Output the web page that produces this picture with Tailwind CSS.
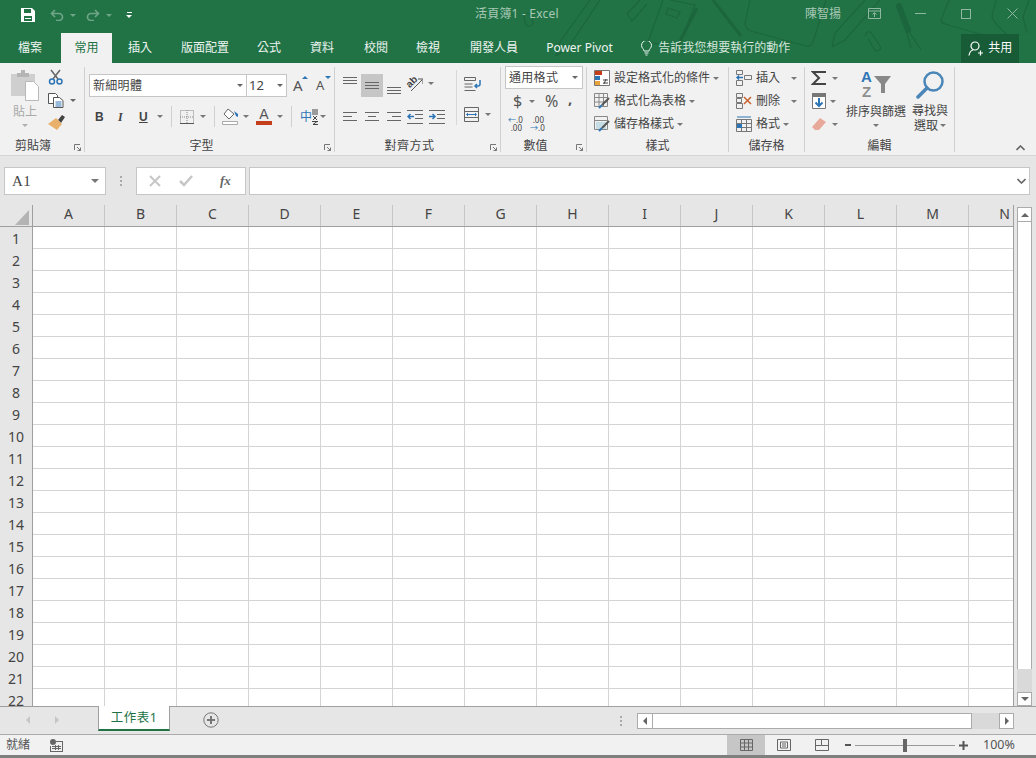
<!DOCTYPE html>
<html lang="zh-Hant">
<head>
<meta charset="UTF-8">
<title>活頁簿1 - Excel</title>
<script src="https://cdn.jsdelivr.net/npm/@tailwindcss/browser@4"></script>
</head>
<body class="w-[1036px] h-[758px] overflow-hidden bg-[#e6e6e6] text-[12px] text-[#444] font-['Noto_Sans','Noto_Sans_CJK_TC',sans-serif]">

<!-- green header: title bar + tabs -->
<header class="relative h-[63px] bg-[#217346] overflow-hidden">
  <svg class="absolute left-0 top-0 w-[1036px] h-[63px]" viewBox="0 0 1036 63" fill="none" stroke="#1c663d" stroke-width="1.200">
    <path d="M556 56 560 42 590 0M556 56 568 48 600 0M563 44l6 4"/>
    <path d="M524 18a4 4 0 0 1 8-1l1 6a4 4 0 0 1-7 2l-2-8"/>
    <path d="M627 14 640 0M647 4 632 21 627 14"/>
    <path d="M663 0 648 42 678 48 695 5 670 0M668 8l12 4-3 6-11-4z"/>
    <path d="M697 8 678 45" stroke-width="3"/>
    <path d="M713 0 741 36" stroke-width="3"/>
    <path d="M750 0 745 24Q746 29 751 31L806 46Q811 47 813 42L826 0"/>
    <path d="M832 47 835 33 865 0M832 47 845 40 880 0"/>
    <path d="M866 36a3 3 0 0 1 6-2l8 12a3 3 0 0 1-6 3l-6-10"/>
    <path d="M899 6 908 30" stroke-width="6" stroke-linecap="round"/>
    <path d="M908 30 921 50M906 30 911 48"/>
    <path d="M949 0 941 20Q941 23 945 24L990 37M1000 0"/>
    <path d="M996 0 992 16Q992 22 1010 37M1029 0 1023 17 1027 33"/>
  </svg>
  <div class="relative flex items-center h-[27px] mb-[6px]">
    <svg class="ml-[21px] mt-[3px] w-[14px] h-[14px]" viewBox="0 0 14 14"><path fill="#fff" d="M0 0h11l3 3v11H0z"/><path fill="#217346" d="M3 1h7v4H3zM3 8h8v5H3z"/><path fill="#fff" d="M4 10h6v1H4z"/></svg>
    <svg class="ml-[15px] mt-[3px] w-[14px] h-[12px]" viewBox="0 0 14 12" fill="none" stroke="#6fa487" stroke-width="1.700"><path d="M5 1 1.500 4.500 5 8M2 4.500h7a3.500 3.500 0 0 1 0 7H6"/></svg>
    <span class="ml-[6px] mt-[3px] border-x-[3px] border-t-[3px] border-x-transparent border-t-[#6fa487]"></span>
    <svg class="ml-[10px] mt-[3px] w-[14px] h-[12px]" viewBox="0 0 14 12" fill="none" stroke="#6fa487" stroke-width="1.700"><path d="M9 1l3.500 3.500L9 8M12 4.500H5a3.500 3.500 0 0 0 0 7h3"/></svg>
    <span class="ml-[6px] mt-[3px] border-x-[3px] border-t-[3px] border-x-transparent border-t-[#6fa487]"></span>
    <div class="ml-[14px] mt-[3px] flex flex-col gap-[2px] items-center">
      <span class="w-[5px] h-px bg-white"></span>
      <span class="border-x-[3px] border-t-[3px] border-x-transparent border-t-white"></span>
    </div>
    <span class="ml-[343px] w-[110px] text-[#a9c9b6] text-[12px] tracking-[0.200px] whitespace-nowrap">活頁簿1 - Excel</span>
    <span class="ml-[220px] text-[#a9c9b6] whitespace-nowrap">陳智揚</span>
    <svg class="ml-[27px] w-[13px] h-[11px]" viewBox="0 0 13 11" fill="none" stroke="#8eb8a1"><path d="M.5.500h12v10H.5zM.5 3h12M6.500 9V5M4.500 6.500l2-2 2 2"/></svg>
    <span class="ml-[34px] w-[11px] h-px bg-[#8eb8a1]"></span>
    <span class="ml-[35px] w-[10px] h-[10px] border border-[#8eb8a1]"></span>
    <svg class="ml-[36px] w-[11px] h-[11px]" viewBox="0 0 11 11" stroke="#8eb8a1"><path d="M.5.500l10 10M10.500.5l-10 10"/></svg>
  </div>
  <nav class="relative flex items-center h-[30px] text-[#eef5f1] text-[12px] whitespace-nowrap">
    <span class="ml-[18px]">檔案</span>
    <span class="ml-[19px] w-[51px] h-[30px] bg-[#f1f1f1] text-[#217346] flex items-center justify-center">常用</span>
    <span class="ml-[16px]">插入</span>
    <span class="ml-[29px]">版面配置</span>
    <span class="ml-[28px]">公式</span>
    <span class="ml-[29px]">資料</span>
    <span class="ml-[30px]">校閱</span>
    <span class="ml-[28px]">檢視</span>
    <span class="ml-[30px]">開發人員</span>
    <span class="ml-[28px] w-[67px] text-[12px]">Power Pivot</span>
    <svg class="ml-[28px] w-[11px] h-[15px]" viewBox="0 0 11 15" fill="none" stroke="#eef5f1"><path d="M3 10c0-2-2.500-3-2.500-5.500a5 5 0 0 1 10 0C10.500 7 8 8 8 10zM3.500 12h4M4.500 14h2"/></svg>
    <span class="ml-[6px] text-[#d5e6dc]">告訴我您想要執行的動作</span>
    <span class="ml-[171px] w-[58px] h-[29px] bg-[#185c37] flex items-center text-white">
      <svg class="ml-[7px] w-[15px] h-[15px]" viewBox="0 0 15 15" fill="none" stroke="#fff" stroke-width="1.200"><circle cx="7" cy="5" r="4"/><path d="M1 14.500c.5-3 2-5 4-5.500M10 12h5M12.500 9.500v5"/></svg>
      <span class="ml-[5px]">共用</span>
    </span>
  </nav>
</header>

<!-- ribbon -->
<section class="relative h-[93px] pt-[4px] bg-[#f1f1f1] border-b border-[#d4d4d4] flex">

  <!-- 剪貼簿 -->
  <div class="relative w-[85px] h-[85px] border-r border-[#d0d0d0] flex flex-col">
    <div class="flex h-[72px]">
      <div class="w-[48px] flex flex-col items-center pl-[2px] text-[#a9a9a9]">
        <svg class="mt-[3px] w-[28px] h-[31px]" viewBox="0 0 28 31"><path fill="#cfcfcf" d="M0 4h24v22H0z"/><path fill="#b5b5b5" d="M6 3h4V0h4v3h4v4H6z"/><path fill="#fff" stroke="#b8b8b8" d="M14.500 11.500h8l5 5v14h-13z"/></svg>
        <span class="mt-[3px] leading-[16px]">貼上</span>
        <span class="mt-[4px] border-x-[3px] border-t-[3px] border-x-transparent border-t-[#b0b0b0]"></span>
      </div>
      <div class="flex flex-col">
        <svg class="mt-[2px] w-[16px] h-[16px]" viewBox="0 0 16 16" fill="none"><path stroke="#666" stroke-width="1.500" d="M3 1l7 9M12 1l-7 9"/><circle cx="4" cy="12.500" r="2.500" stroke="#2e75b6" stroke-width="1.500"/><circle cx="11.500" cy="12.500" r="2.500" stroke="#2e75b6" stroke-width="1.500"/></svg>
        <div class="mt-[8px] flex items-center">
          <svg class="w-[16px] h-[15px]" viewBox="0 0 16 15" fill="#fff" stroke="#555"><path d="M.5.500h7l2 2v8h-9z"/><path d="M5.500 4.500h6l3.500 3v7H5.500z"/><path stroke="#2e75b6" d="M7.500 9h6M7.500 11h6M7.500 13h6"/></svg>
          <span class="ml-[6px] border-x-[3px] border-t-[3px] border-x-transparent border-t-[#666]"></span>
        </div>
        <svg class="mt-[7px] w-[17px] h-[16px]" viewBox="0 0 17 16"><path fill="#444" d="M10 5l4-5 3 2-4 6z"/><path fill="#e8b06a" d="M8 3l6 6-5 6-9-6z"/></svg>
      </div>
    </div>
    <div class="h-[13px] leading-[13px] text-center pr-[18px]">剪貼簿</div>
    <svg class="absolute right-[3px] bottom-[1px] w-[7px] h-[7px]" viewBox="0 0 7 7" fill="none" stroke="#777"><path d="M.5 6V.5H6M3 3l3.500 3.500M6.500 3.500v3h-3"/></svg>
  </div>

  <!-- 字型 -->
  <div class="relative w-[250px] h-[85px] border-r border-[#d0d0d0] flex flex-col">
    <div class="h-[72px] pl-[4px] pt-[7px]">
      <div class="flex items-center h-[23px]">
        <div class="w-[158px] h-[23px] bg-white border border-[#c6c6c6] flex items-center pl-[3px]">
          <span class="flex-1 tracking-[0.300px]">新細明體</span>
          <span class="mr-[3px] border-x-[3px] border-t-[3px] border-x-transparent border-t-[#666]"></span>
        </div>
        <div class="-ml-px w-[41px] h-[23px] bg-white border border-[#c6c6c6] flex items-center pl-[2px]">
          <span class="flex-1 text-[13px]">12</span>
          <span class="mr-[3px] border-x-[3px] border-t-[3px] border-x-transparent border-t-[#666]"></span>
        </div>
        <span class="relative ml-[6px] w-[15px] text-[15px] leading-none text-[#555]">A<span class="absolute right-0 top-[-2px] border-x-[3px] border-b-[3px] border-x-transparent border-b-[#2e75b6]"></span></span>
        <span class="relative ml-[8px] w-[13px] text-[13px] leading-none text-[#555]">A<span class="absolute right-[-2px] top-[-3px] border-x-[3px] border-t-[3px] border-x-transparent border-t-[#2e75b6]"></span></span>
      </div>
      <div class="mt-[8px] flex items-center h-[23px]">
        <span class="ml-[6px] w-[12px] text-[12px] font-bold font-['Liberation_Sans']">B</span>
        <span class="ml-[11px] w-[12px] text-[12px] font-bold italic font-['Liberation_Serif']">I</span>
        <span class="ml-[9px] w-[10px] text-[12px] font-bold underline font-['Liberation_Sans']">U</span>
        <span class="ml-[8px] border-x-[3px] border-t-[3px] border-x-transparent border-t-[#777]"></span>
        <span class="ml-[8px] w-px h-[21px] bg-[#d0d0d0]"></span>
        <svg class="ml-[8px] w-[14px] h-[14px]" viewBox="0 0 14 14" fill="none" stroke="#888" stroke-dasharray="1 1"><path d="M.5.500h13v13H.5zM7 0v14M0 7h14"/><path stroke="#555" stroke-dasharray="none" d="M0 13.500h14"/></svg>
        <span class="ml-[6px] border-x-[3px] border-t-[3px] border-x-transparent border-t-[#777]"></span>
        <span class="ml-[8px] w-px h-[21px] bg-[#d0d0d0]"></span>
        <svg class="ml-[7px] w-[17px] h-[17px]" viewBox="0 0 17 17" fill="none"><path fill="#fff" stroke="#666" d="M6 1l6 5-5 5-5-5z"/><path fill="#2e75b6" d="M12 3l4 3v3l-2-1z"/><path fill="#fff" stroke="#aaa" d="M.5 13.500h15v3H.5z"/></svg>
        <span class="ml-[4px] border-x-[3px] border-t-[3px] border-x-transparent border-t-[#777]"></span>
        <span class="ml-[7px] w-[16px] flex flex-col items-center leading-[13px] text-[14px] font-['Liberation_Sans'] text-[#555]">A<span class="w-[16px] h-[4px] bg-[#c43e1c]"></span></span>
        <span class="ml-[5px] border-x-[3px] border-t-[3px] border-x-transparent border-t-[#777]"></span>
        <span class="ml-[8px] w-px h-[21px] bg-[#d0d0d0]"></span>
        <span class="ml-[8px] w-[12px] text-[12px] text-[#2e75b6] whitespace-nowrap">中</span>
        <svg class="w-[6px] h-[16px]" viewBox="0 0 6 16" fill="none" stroke="#444"><path d="M0 1h6M0 3h6M0 5h6M1 7l4 4M5 7l-4 4M0 12.500h6M5 12.500l-4 3h5"/></svg>
        <span class="ml-[2px] border-x-[3px] border-t-[3px] border-x-transparent border-t-[#777]"></span>
      </div>
    </div>
    <div class="h-[13px] leading-[13px] text-center pr-[16px]">字型</div>
    <svg class="absolute right-[3px] bottom-[1px] w-[7px] h-[7px]" viewBox="0 0 7 7" fill="none" stroke="#777"><path d="M.5 6V.5H6M3 3l3.500 3.500M6.500 3.500v3h-3"/></svg>
  </div>

  <!-- 對齊方式 -->
  <div class="relative w-[166px] h-[85px] border-r border-[#d0d0d0] flex flex-col">
    <div class="h-[72px] flex">
      <div class="w-[121px] pl-[4px] pt-[7px]">
        <div class="flex items-start h-[23px]">
          <span class="w-[22px] h-[23px] flex justify-center pt-[3px]"><svg class="w-[14px] h-[7px]" viewBox="0 0 14 7" stroke="#666"><path d="M0 .5h14M0 3.500h14M0 6.500h14"/></svg></span>
          <span class="w-[22px] h-[23px] bg-[#c6c6c6] flex justify-center items-center"><svg class="w-[14px] h-[7px]" viewBox="0 0 14 7" stroke="#666"><path d="M0 .5h14M0 3.500h14M0 6.500h14"/></svg></span>
          <span class="w-[22px] h-[23px] flex justify-center items-end pb-[3px]"><svg class="w-[14px] h-[7px]" viewBox="0 0 14 7" stroke="#666"><path d="M0 .5h14M0 3.500h14M0 6.500h14"/></svg></span>
          <span class="relative ml-[2px] mt-[2px] w-[16px] h-[16px]">
            <span class="absolute left-[-1px] top-[1px] -rotate-45 text-[10px] leading-[10px] font-bold text-[#444] font-['Liberation_Sans']">ab</span>
            <svg class="absolute left-0 top-0 w-[16px] h-[16px]" viewBox="0 0 16 16" fill="none" stroke="#555"><path d="M4 15 15 4M11 3h5v5"/></svg>
          </span>
          <span class="ml-[5px] mt-[8px] border-x-[3px] border-t-[3px] border-x-transparent border-t-[#777]"></span>
        </div>
        <div class="mt-[8px] flex items-center h-[23px]">
          <span class="w-[22px] flex justify-center"><svg class="w-[14px] h-[9px]" viewBox="0 0 14 9" stroke="#666"><path d="M0 .5h14M0 4.500h9M0 8.500h14"/></svg></span>
          <span class="w-[22px] flex justify-center"><svg class="w-[14px] h-[9px]" viewBox="0 0 14 9" stroke="#666"><path d="M0 .5h14M3 4.500h8M0 8.500h14"/></svg></span>
          <span class="w-[22px] flex justify-center"><svg class="w-[14px] h-[9px]" viewBox="0 0 14 9" stroke="#666"><path d="M0 .5h14M5 4.500h9M0 8.500h14"/></svg></span>
          <svg class="ml-[2px] w-[16px] h-[14px]" viewBox="0 0 16 14" fill="none" stroke="#666"><path d="M0 .5h16M8 4.500h8M8 8.500h8M0 13.500h16"/><path stroke="#2e75b6" stroke-width="1.500" d="M7 6.500H1M3.500 4l-2.500 2.500L3.500 9"/></svg>
          <svg class="ml-[6px] w-[16px] h-[14px]" viewBox="0 0 16 14" fill="none" stroke="#666"><path d="M0 .5h16M8 4.500h8M8 8.500h8M0 13.500h16"/><path stroke="#2e75b6" stroke-width="1.500" d="M0 6.500h6M3.500 4 6 6.500 3.500 9"/></svg>
        </div>
      </div>
      <span class="mt-[3px] w-px h-[55px] bg-[#d8d8d8]"></span>
      <div class="ml-[7px] pt-[10px]">
        <svg class="w-[18px] h-[15px]" viewBox="0 0 18 15" fill="none" stroke="#666"><path d="M.5.500h11v3H.5zM.5 7h8M.5 10h8M.5 13.500h11"/><path stroke="#2e75b6" stroke-width="1.500" d="M16 3v4a2 2 0 0 1-2 2h-3M13 7l-2 2 2 2"/></svg>
        <div class="mt-[15px] flex items-center">
          <svg class="w-[15px] h-[15px]" viewBox="0 0 15 15" fill="none" stroke="#666"><path d="M.5.500h14v14H.5zM.5 4.500h14M.5 10.500h14"/><path stroke="#2e75b6" d="M3 7.500h9M4 6 2.500 7.500 4 9M11 6l1.500 1.500L11 9"/></svg>
          <span class="ml-[6px] border-x-[3px] border-t-[3px] border-x-transparent border-t-[#777]"></span>
        </div>
      </div>
    </div>
    <div class="h-[13px] leading-[13px] text-center tracking-[0.500px] pr-[16px]">對齊方式</div>
    <svg class="absolute right-[3px] bottom-[1px] w-[7px] h-[7px]" viewBox="0 0 7 7" fill="none" stroke="#777"><path d="M.5 6V.5H6M3 3l3.500 3.500M6.500 3.500v3h-3"/></svg>
  </div>

  <!-- 數值 -->
  <div class="relative w-[86px] h-[85px] border-r border-[#d0d0d0] flex flex-col">
    <div class="h-[72px] pl-[4px]">
      <div class="-mt-px w-[78px] h-[23px] bg-white border border-[#c6c6c6] flex items-center pl-[3px]">
        <span class="flex-1 tracking-[0.300px]">通用格式</span>
        <span class="mr-[4px] border-x-[3px] border-t-[3px] border-x-transparent border-t-[#666]"></span>
      </div>
      <div class="mt-[1px] h-[22px] flex items-center">
        <span class="ml-[8px] w-[9px] text-[16px] text-[#555]">$</span>
        <span class="ml-[7px] border-x-[3px] border-t-[3px] border-x-transparent border-t-[#777]"></span>
        <span class="ml-[10px] w-[13px] text-[16px] text-[#555]">%</span>
        <span class="ml-[10px] text-[15px] font-bold text-[#555] leading-none -mt-[6px]">,</span>
      </div>
      <div class="mt-[4px] flex items-center text-[8px] leading-[8px] text-[#444]">
        <span class="ml-[3px] w-[14px] text-right"><span class="text-[#2e75b6]">←</span>.0<br>.00</span>
        <span class="ml-[8px] w-[14px] text-right">.00<br><span class="text-[#2e75b6]">→</span>.0</span>
      </div>
    </div>
    <div class="h-[13px] leading-[13px] text-center pr-[16px]">數值</div>
    <svg class="absolute right-[3px] bottom-[1px] w-[7px] h-[7px]" viewBox="0 0 7 7" fill="none" stroke="#777"><path d="M.5 6V.5H6M3 3l3.500 3.500M6.500 3.500v3h-3"/></svg>
  </div>

  <!-- 樣式 -->
  <div class="w-[142px] h-[85px] border-r border-[#d0d0d0] flex flex-col">
    <div class="h-[72px] pl-[7px] pt-[3px] flex flex-col gap-[7px]">
      <div class="flex items-center h-[16px]">
        <svg class="w-[16px] h-[16px]" viewBox="0 0 16 16"><path fill="#fff" stroke="#777" d="M.5.500h15v15H.5z"/><path fill="#c43e1c" d="M1 1h7v4H1z"/><path fill="#2e75b6" d="M1 6h5v4H1z"/><path fill="#e8a33d" d="M1 11h5v4H1z"/><path stroke="#444" d="M9 10h5M9 13h5M12 9l-2 5"/></svg>
        <span class="ml-[4px] w-[96px] whitespace-nowrap">設定格式化的條件</span>
        <span class="ml-[3px] border-x-[3px] border-t-[3px] border-x-transparent border-t-[#777]"></span>
      </div>
      <div class="flex items-center h-[16px]">
        <svg class="w-[16px] h-[16px]" viewBox="0 0 16 16" fill="none" stroke="#888"><path d="M.5.500h13v13H.5zM.5 4.500h13M.5 9h13M5 .5v13M9.500.5v13"/><path stroke="#2e75b6" stroke-width="2" d="M5 15l3-3"/><path stroke="#555" stroke-width="2" d="M8 12l7-7"/></svg>
        <span class="ml-[4px] w-[72px] whitespace-nowrap">格式化為表格</span>
        <span class="ml-[3px] border-x-[3px] border-t-[3px] border-x-transparent border-t-[#777]"></span>
      </div>
      <div class="flex items-center h-[16px]">
        <svg class="w-[16px] h-[16px]" viewBox="0 0 16 16" fill="none" stroke="#888"><path d="M.5.500h13v13H.5zM.5 4.500h13"/><path fill="#c6dde6" stroke="none" d="M2 6h10v7H2z"/><path stroke="#2e75b6" stroke-width="2" d="M5 15l3-3"/><path stroke="#555" stroke-width="2" d="M8 12l7-7"/></svg>
        <span class="ml-[4px] w-[60px] whitespace-nowrap">儲存格樣式</span>
        <span class="ml-[3px] border-x-[3px] border-t-[3px] border-x-transparent border-t-[#777]"></span>
      </div>
    </div>
    <div class="h-[13px] leading-[13px] text-center">樣式</div>
  </div>

  <!-- 儲存格 -->
  <div class="w-[76px] h-[85px] border-r border-[#d0d0d0] flex flex-col">
    <div class="h-[72px] pl-[7px] pt-[3px] flex flex-col gap-[7px]">
      <div class="flex items-center h-[16px]">
        <svg class="w-[16px] h-[16px]" viewBox="0 0 16 16" fill="none" stroke="#777"><path d="M.5.500h6v4h-6zM.5 10.500h6v5h-6zM8.500 5.500h7v4h-7z"/><path stroke="#2e75b6" stroke-width="1.500" d="M7 7.500H1M3 5.500l-2 2 2 2"/></svg>
        <span class="ml-[4px] w-[24px]">插入</span>
        <span class="ml-[11px] border-x-[3px] border-t-[3px] border-x-transparent border-t-[#777]"></span>
      </div>
      <div class="flex items-center h-[16px]">
        <svg class="w-[16px] h-[16px]" viewBox="0 0 16 16" fill="none" stroke="#777"><path d="M.5.500h6v4h-6zM.5 10.500h6v5h-6zM.5 5.500h5v4h-5z"/><path stroke="#c8612e" stroke-width="1.500" d="M8 4l7 7M15 4l-7 7"/></svg>
        <span class="ml-[4px] w-[24px]">刪除</span>
        <span class="ml-[11px] border-x-[3px] border-t-[3px] border-x-transparent border-t-[#777]"></span>
      </div>
      <div class="flex items-center h-[16px]">
        <svg class="w-[16px] h-[16px]" viewBox="0 0 16 16" fill="none" stroke="#777"><path d="M.5 3.500h15v12H.5zM.5 7.500h15M.5 11.500h15M5.500 3.500v12M10.500 3.500v12"/><path fill="#2e75b6" stroke="none" d="M1 8h5v4H1z"/><path stroke="#2e75b6" d="M1 1h14"/></svg>
        <span class="ml-[4px] w-[24px]">格式</span>
        <span class="ml-[3px] border-x-[3px] border-t-[3px] border-x-transparent border-t-[#777]"></span>
      </div>
    </div>
    <div class="h-[13px] leading-[13px] text-center">儲存格</div>
  </div>

  <!-- 編輯 -->
  <div class="w-[150px] h-[85px] border-r border-[#d0d0d0] flex flex-col">
    <div class="h-[72px] flex">
      <div class="pl-[6px] pt-[3px] w-[40px] flex flex-col gap-[7px]">
        <div class="flex items-center h-[16px]">
          <svg class="w-[16px] h-[16px]" viewBox="0 0 16 16" fill="none" stroke="#444" stroke-width="2"><path d="M15 2H2l6 6-6 6h13"/></svg>
          <span class="ml-[5px] border-x-[3px] border-t-[3px] border-x-transparent border-t-[#777]"></span>
        </div>
        <div class="flex items-center h-[16px]">
          <svg class="ml-[1px] w-[14px] h-[16px]" viewBox="0 0 14 16"><path fill="#fff" stroke="#777" d="M.5.500h13v15H.5z"/><path fill="#777" d="M0 0h14v4H0z"/><path fill="none" stroke="#2e75b6" stroke-width="2" d="M7 5v8M3.500 9.500 7 13l3.500-3.500"/></svg>
          <span class="ml-[4px] border-x-[3px] border-t-[3px] border-x-transparent border-t-[#777]"></span>
        </div>
        <div class="flex items-center h-[16px]">
          <svg class="w-[16px] h-[14px]" viewBox="0 0 16 14"><path fill="#e9a99a" d="M9 1l6 4-7 8H4L1 10z"/></svg>
          <span class="ml-[5px] border-x-[3px] border-t-[3px] border-x-transparent border-t-[#777]"></span>
        </div>
      </div>
      <div class="w-[62px] flex flex-col items-center">
        <div class="mt-[5px] relative w-[30px] h-[27px]">
          <span class="absolute left-0 top-[-3px] text-[15px] leading-[15px] font-bold text-[#2e75b6] font-['Liberation_Sans']">A</span>
          <span class="absolute left-[1px] top-[12px] text-[15px] leading-[15px] font-bold text-[#8f8f8f] font-['Liberation_Sans']">Z</span>
          <svg class="absolute right-0 top-[4px] w-[17px] h-[17px]" viewBox="0 0 17 17"><path fill="#888" d="M0 0h17L11 8v9H7V8z"/></svg>
        </div>
        <span class="mt-[5px] leading-[15px] whitespace-nowrap">排序與篩選</span>
        <span class="mt-[5px] border-x-[3px] border-t-[3px] border-x-transparent border-t-[#777]"></span>
      </div>
      <div class="ml-[3px] w-[40px] flex flex-col items-center">
        <svg class="mt-[4px] w-[28px] h-[28px]" viewBox="0 0 28 28" fill="none" stroke="#4a86b8"><circle cx="17.500" cy="10.500" r="9" stroke-width="2.500"/><path stroke-width="3.500" stroke-linecap="round" d="M11 17 2 26"/></svg>
        <span class="mt-[4px] leading-[15px] whitespace-nowrap">尋找與</span>
        <span class="leading-[15px] whitespace-nowrap flex items-center">選取<span class="ml-[2px] border-x-[3px] border-t-[3px] border-x-transparent border-t-[#777]"></span></span>
      </div>
    </div>
    <div class="h-[13px] leading-[13px] text-center">編輯</div>
  </div>

  <svg class="absolute left-[1016px] top-[82px] w-[9px] h-[6px]" viewBox="0 0 9 6" fill="none" stroke="#666" stroke-width="1.600"><path d="M.5 5 4.500 1l4 4"/></svg>
</section>

<!-- formula bar -->
<div class="h-[49px] flex items-start pt-[11px] bg-[#e6e6e6]">
  <div class="ml-[4px] w-[102px] h-[28px] bg-white border border-[#c6c6c6] flex items-center pl-[7px]">
    <span class="flex-1 text-[15px] font-['Liberation_Serif'] tracking-[0.500px]">A1</span>
    <span class="mr-[6px] border-x-[4px] border-t-[4px] border-x-transparent border-t-[#777]"></span>
  </div>
  <div class="ml-[13px] w-[3px] h-[28px] flex flex-col justify-center gap-[2px] items-center">
    <span class="w-[2px] h-[2px] bg-[#aaa]"></span><span class="w-[2px] h-[2px] bg-[#aaa]"></span><span class="w-[2px] h-[2px] bg-[#aaa]"></span>
  </div>
  <div class="ml-[14px] w-[110px] h-[28px] bg-white border border-[#c6c6c6] flex items-center">
    <svg class="ml-[12px] w-[12px] h-[12px]" viewBox="0 0 12 12" stroke="#c6c6c6" stroke-width="2"><path d="M1 1l10 10M11 1 1 11"/></svg>
    <svg class="ml-[18px] w-[14px] h-[12px]" viewBox="0 0 14 12" fill="none" stroke="#c6c6c6" stroke-width="2.500"><path d="M1 6l4 4 8-9"/></svg>
    <span class="ml-[27px] text-[13px] italic font-bold font-['Liberation_Serif'] text-[#666]">fx</span>
  </div>
  <div class="ml-[3px] w-[781px] h-[28px] bg-white border border-[#c6c6c6] flex items-center justify-end pr-[3px]">
    <svg class="w-[9px] h-[6px]" viewBox="0 0 9 6" fill="none" stroke="#666" stroke-width="1.600"><path d="M.5 1l4 4 4-4"/></svg>
  </div>
</div>

<!-- sheet area -->
<main class="h-[501px] flex">
  <div class="relative w-[1014px] h-[501px] overflow-hidden border-r border-[#9f9f9f]">
    <div id="col-head" class="flex h-[22px] border-b border-[#9f9f9f] bg-[#e6e6e6]"></div>
    <div id="rows" class="bg-white"></div>
    <svg class="absolute left-[15px] top-[5px] w-[14px] h-[15px]" viewBox="0 0 14 15"><path fill="#b4b4b4" d="M14 0v15H0z"/></svg>
  </div>
  <div class="ml-[3px] w-[15px] h-[501px] flex flex-col pt-[2px]">
    <div class="h-[15px] bg-white border border-[#ababab] flex items-center justify-center"><span class="border-x-[4px] border-b-[4px] border-x-transparent border-b-[#666]"></span></div>
    <div class="h-[447px] bg-white border-x border-[#ababab]"></div>
    <div class="h-[23px] bg-[#d9d9d9]"></div>
    <div class="h-[14px] bg-white border border-[#ababab] flex items-center justify-center"><span class="border-x-[4px] border-t-[4px] border-x-transparent border-t-[#666]"></span></div>
  </div>
</main>

<!-- sheet tabs + horizontal scrollbar -->
<div class="h-[28px] flex items-start border-t border-[#9f9f9f] bg-[#e6e6e6]">
  <span class="ml-[26px] mt-[9px] border-y-[4px] border-r-[4px] border-y-transparent border-r-[#c6c6c6]"></span>
  <span class="ml-[25px] mt-[9px] border-y-[4px] border-l-[4px] border-y-transparent border-l-[#c6c6c6]"></span>
  <div class="-mt-px ml-[39px] w-[72px] h-[25px] pt-[1px] bg-white border-x border-[#9f9f9f] border-b-[2px] border-b-[#217346] flex items-center justify-center text-[#217346] text-[12.500px] tracking-[0.500px]">工作表1</div>
  <svg class="ml-[33px] mt-[5px] w-[16px] h-[16px]" viewBox="0 0 16 16" fill="none" stroke="#777"><circle cx="8" cy="8" r="7.200"/><path stroke-width="2" d="M8 4v8M4 8h8"/></svg>
  <div class="ml-[400px] mt-[9px] w-[3px] flex flex-col gap-[2px] items-center">
    <span class="w-[2px] h-[2px] bg-[#aaa]"></span><span class="w-[2px] h-[2px] bg-[#aaa]"></span><span class="w-[2px] h-[2px] bg-[#aaa]"></span>
  </div>
  <div class="ml-[15px] mt-[6px] w-[377px] h-[16px] flex">
    <div class="w-[16px] h-[16px] bg-white border border-[#ababab] flex items-center justify-center"><span class="border-y-[4px] border-r-[4px] border-y-transparent border-r-[#666]"></span></div>
    <div class="w-[319px] h-[16px] bg-white border-y border-r border-[#ababab]"></div>
    <div class="flex-1 bg-[#d9d9d9]"></div>
    <div class="w-[15px] h-[16px] bg-white border border-[#ababab] flex items-center justify-center"><span class="border-y-[4px] border-l-[4px] border-y-transparent border-l-[#666]"></span></div>
  </div>
</div>

<!-- status bar -->
<footer class="h-[21px] flex items-center bg-[#f1f1f1] border-t border-[#ababab] text-[12px] text-[#555]">
  <span class="ml-[6px] w-[24px]">就緒</span>
  <svg class="ml-[20px] w-[13px] h-[13px]" viewBox="0 0 13 13"><circle cx="3" cy="3" r="3" fill="#666"/><path fill="#666" d="M6 2h7v11H0V7h1v5h11V3H6z"/><path fill="#666" d="M2 7h9v1H2zM2 9h9v1H2zM5 6h1v5H5zM8 6h1v5H8z"/></svg>
  <div class="ml-[664px] w-[38px] h-[20px] bg-[#c6c6c6] flex items-center justify-center">
    <svg class="w-[13px] h-[12px]" viewBox="0 0 13 12" fill="none" stroke="#666"><path d="M.5.500h12v11H.5zM.5 4h12M.5 8h12M4.500.5v11M8.500.5v11"/></svg>
  </div>
  <svg class="ml-[12px] w-[14px] h-[12px]" viewBox="0 0 14 12" fill="none" stroke="#666"><path d="M.5.500h13v11H.5zM3.500 3h7v6h-7zM5 5h4M5 7h4"/></svg>
  <svg class="ml-[24px] w-[14px] h-[12px]" viewBox="0 0 14 12" fill="none" stroke="#666"><path d="M.5.500h13v11H.5zM.5 6.500h6v-6M6.500 6.500h7"/></svg>
  <span class="ml-[16px] w-[6px] h-[2px] bg-[#555]"></span>
  <div class="relative ml-[4px] w-[100px] h-px bg-[#999]">
    <span class="absolute left-[48px] top-[-6px] w-[4px] h-[13px] bg-[#666]"></span>
  </div>
  <svg class="ml-[4px] w-[9px] h-[9px]" viewBox="0 0 9 9" stroke="#555" stroke-width="2"><path d="M0 4.500h9M4.500 0v9"/></svg>
  <span class="ml-[15px] text-[12.500px]">100%</span>
</footer>
<div class="h-[3px] bg-[#7f7f7f]"></div>

<script>
  // 欄列標題與格線
  const colHead = document.getElementById('col-head');
  const rowsEl = document.getElementById('rows');
  const letters = 'ABCDEFGHIJKLMN'.split('');

  colHead.innerHTML = '<div class="w-[33px] shrink-0 border-r border-[#9f9f9f]"></div>' + letters.map(l =>
    `<div class="w-[72px] shrink-0 border-r border-[#c6c6c6] text-center text-[14px] leading-[17px] text-[#444]">${l}</div>`
  ).join('');

  let html = '';
  for (let r = 1; r <= 22; r++) {
    html += `<div class="flex h-[22px]"><div class="w-[33px] shrink-0 bg-[#e6e6e6] border-r border-[#9f9f9f] text-center text-[14px] leading-[24px] text-[#444]">${r}</div>`;
    html += letters.map(() => '<div class="w-[72px] shrink-0 border-r border-b border-[#d4d4d4]"></div>').join('');
    html += '</div>';
  }
  rowsEl.innerHTML = html;
</script>
</body>
</html>
